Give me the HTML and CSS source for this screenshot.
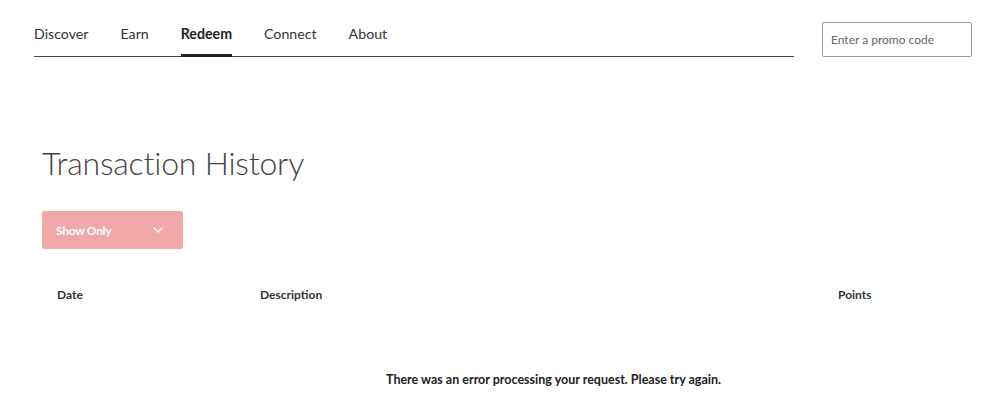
FILE: index.html
```html
<!DOCTYPE html>
<html lang="en">
<head>
    <meta charset="UTF-8">
    <meta name="viewport" content="width=device-width, initial-scale=1.0">
    <title>Transaction History</title>
    <link rel="stylesheet" href="styles.css">
</head>
<body>
    <header class="top">
        <nav class="nav">
            <a href="#">Discover</a>
            <a href="#">Earn</a>
            <a href="#" class="active">Redeem</a>
            <a href="#">Connect</a>
            <a href="#">About</a>
        </nav>
        <input class="promo" type="text" placeholder="Enter a promo code">
    </header>

    <main class="content">
        <h1>Transaction History</h1>
        <button class="filter">
            <span>Show Only</span>
            <svg width="12" height="8" viewBox="0 0 12 8"><path d="M1.5 1.5 6 6l4.5-4.5" fill="none" stroke="#fff" stroke-width="1.4"/></svg>
        </button>

        <div class="table-head">
            <div class="col-date">Date</div>
            <div class="col-desc">Description</div>
            <div class="col-points">Points</div>
        </div>
        <p class="error">There was an error processing your request. Please try again.</p>
    </main>
</body>
</html>
```

FILE: styles.css
```css
body {
    font-family: Lato, "Open Sans", sans-serif;
    margin: 0;
    background-color: #fff;
    color: #333;
}
.top {
    display: flex;
    align-items: flex-start;
    padding: 22px 0 0 34px;
}
.nav {
    display: flex;
    gap: 32px;
    width: 760px;
    border-bottom: 1px solid #444;
    height: 35px;
    box-sizing: border-box;
}
.nav a {
    color: #333;
    text-decoration: none;
    font-size: 14.2px;
    line-height: 24px;
    height: 35px;
    box-sizing: border-box;
    margin-bottom: -1px;
}
.nav a.active {
    font-weight: bold;
    color: #222;
    border-bottom: 3px solid #222;
}
.promo {
    margin-left: 28px;
    width: 150px;
    height: 35px;
    box-sizing: border-box;
    border: 1px solid #999;
    border-radius: 2px;
    padding: 0 8px;
    font-family: Lato, sans-serif;
    font-size: 12px;
}
.promo::placeholder {
    color: #666;
}
.content {
    padding: 0 0 0 42px;
}
h1 {
    font-weight: 300;
    font-size: 32px;
    color: #444;
    margin: 86px 0 0 0;
    line-height: 40px;
    letter-spacing: -0.2px;
}
.filter {
    margin-top: 28px;
    width: 141px;
    height: 38px;
    background-color: #f1a8a8;
    border: none;
    border-radius: 2px;
    display: flex;
    align-items: center;
    justify-content: space-between;
    padding: 0 19px 0 14px;
    color: #fff;
    font-family: Lato, sans-serif;
    font-weight: bold;
    font-size: 12px;
    letter-spacing: -0.3px;
}
.table-head {
    display: flex;
    margin-top: 38px;
    font-size: 12px;
    font-weight: bold;
    color: #333;
}
.col-date {
    width: 203px;
    padding-left: 15px;
}
.col-desc {
    width: 578px;
}
.error {
    margin: 70px 0 0 344px;
    font-size: 12.5px;
    font-weight: bold;
    color: #222;
}
```
